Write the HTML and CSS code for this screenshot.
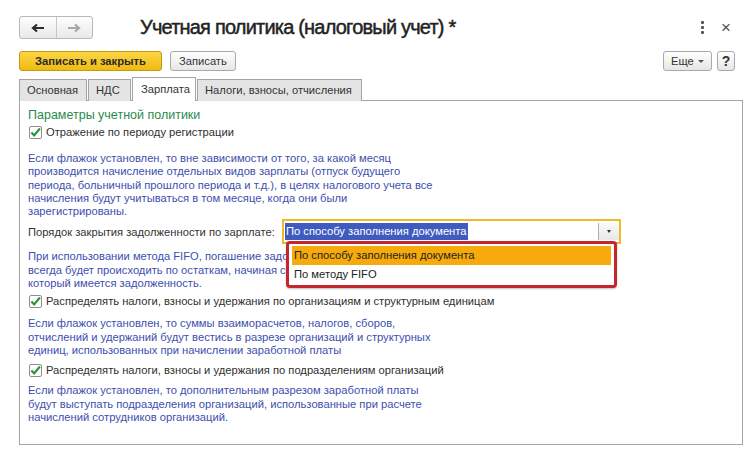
FILE: index.html
```html
<!DOCTYPE html>
<html lang="ru">
<head>
<meta charset="utf-8">
<title>Учетная политика (налоговый учет)</title>
<link rel="stylesheet" href="styles.css">
</head>
<body>
<div class="window">
  <div class="header">
    <div class="nav">
      <span class="nav-btn">
        <svg width="14" height="10" viewBox="0 0 14 10"><path d="M13 5H3M6 1.5L2 5l4 3.5" fill="none" stroke="#2b2b2b" stroke-width="2.2"/></svg>
      </span>
      <span class="nav-btn">
        <svg width="14" height="10" viewBox="0 0 14 10"><path d="M1 5h10M8 1.5L12 5 8 8.5" fill="none" stroke="#a8a8a8" stroke-width="2.2"/></svg>
      </span>
    </div>
    <h1 class="title">Учетная политика (налоговый учет) *</h1>
    <div class="win-icons">
      <span class="dots"><i></i><i></i><i></i></span>
      <span class="close">×</span>
    </div>
  </div>

  <div class="toolbar">
    <button class="btn btn-primary">Записать и закрыть</button>
    <button class="btn">Записать</button>
    <div class="toolbar-right">
      <button class="btn btn-more">Еще <span class="caret"></span></button>
      <button class="btn btn-help">?</button>
    </div>
  </div>

  <div class="tabs">
    <span class="tab">Основная</span>
    <span class="tab">НДС</span>
    <span class="tab active">Зарплата</span>
    <span class="tab">Налоги, взносы, отчисления</span>
  </div>

  <div class="panel">
    <div class="group-title">Параметры учетной политики</div>
    <label class="check"><span class="box"><svg width="12" height="11" viewBox="0 0 12 11"><path d="M1.5 5.5l3 3.2L10.8 1.2" fill="none" stroke="#27973a" stroke-width="2.4"/></svg></span>Отражение по периоду регистрации</label>
    <p class="hint p1">Если флажок установлен, то вне зависимости от того, за какой месяц<br>производится начисление отдельных видов зарплаты (отпуск будущего<br>периода, больничный прошлого периода и т.д.), в целях налогового учета все<br>начисления будут учитываться в том месяце, когда они были<br>зарегистрированы.</p>

    <div class="field-row">
      <span class="field-label">Порядок закрытия задолженности по зарплате:</span>
      <div class="select">
        <span class="select-value"><span class="sel">По способу заполнения документа</span></span>
        <span class="select-btn"><span class="dot-caret"></span></span>
        <div class="popup">
          <div class="opt current">По способу заполнения документа</div>
          <div class="opt">По методу FIFO</div>
        </div>
      </div>
    </div>

    <p class="hint p2">При использовании метода FIFO, погашение задолженности по зарплате<br>всегда будет происходить по остаткам, начиная с самого раннего месяца, в<br>который имеется задолженность.</p>

    <label class="check"><span class="box"><svg width="12" height="11" viewBox="0 0 12 11"><path d="M1.5 5.5l3 3.2L10.8 1.2" fill="none" stroke="#27973a" stroke-width="2.4"/></svg></span>Распределять налоги, взносы и удержания по организациям и структурным единицам</label>
    <p class="hint p3">Если флажок установлен, то суммы взаиморасчетов, налогов, сборов,<br>отчислений и удержаний будут вестись в разрезе организаций и структурных<br>единиц, использованных при начислении заработной платы</p>

    <label class="check"><span class="box"><svg width="12" height="11" viewBox="0 0 12 11"><path d="M1.5 5.5l3 3.2L10.8 1.2" fill="none" stroke="#27973a" stroke-width="2.4"/></svg></span>Распределять налоги, взносы и удержания по подразделениям организаций</label>
    <p class="hint p4">Если флажок установлен, то дополнительным разрезом заработной платы<br>будут выступать подразделения организаций, использованные при расчете<br>начислений сотрудников организаций.</p>
  </div>
</div>
</body>
</html>
```

FILE: styles.css
```css
* { box-sizing: border-box; }
html, body { margin: 0; padding: 0; background: #fff; }
body {
  font-family: "Liberation Sans", Arial, sans-serif;
  font-size: 11.2px;
  color: #333;
  width: 750px;
  height: 454px;
  overflow: hidden;
}
.window { padding: 16px 7px 0 19px; }

.header { display: flex; align-items: center; height: 23px; }
.nav {
  display: flex;
  width: 74px;
  height: 23px;
  border: 1px solid #b9b9b9;
  border-radius: 3px;
  background: linear-gradient(#fdfdfd, #e9e9e9);
}
.nav-btn {
  flex: 1;
  display: flex;
  align-items: center;
  justify-content: center;
}
.nav-btn + .nav-btn { border-left: 1px solid #c8c8c8; }
.title {
  margin: 0 0 0 47px;
  font-size: 20px;
  font-weight: normal;
  color: #222;
  letter-spacing: -0.8px;
  -webkit-text-stroke: 0.45px #222;
}
.win-icons { margin-left: auto; display: flex; align-items: center; gap: 17px; padding-right: 12px; }
.dots { display: flex; flex-direction: column; gap: 2px; }
.dots i { display: block; width: 3px; height: 3px; background: #555; border-radius: 1px; }
.close { font-size: 17px; color: #555; line-height: 1; }

.toolbar { display: flex; align-items: center; margin-top: 12px; height: 20px; gap: 8px; }
.btn {
  font-family: "Liberation Sans", Arial, sans-serif;
  font-size: 11.2px;
  color: #333;
  height: 20px;
  padding: 0 8px;
  border: 1px solid #a9a9a9;
  border-radius: 3px;
  background: linear-gradient(#ffffff, #e6e6e6);
  line-height: 18px;
}
.btn-primary {
  width: 143px;
  background: linear-gradient(#fbd545, #f0bb10);
  border-color: #c39b0e;
  font-weight: bold;
  color: #2b2b2b;
  padding: 0;
}
.toolbar-right { margin-left: auto; display: flex; gap: 5px; padding-right: 8px; }
.btn-more { width: 49px; padding: 0 6px; }
.caret {
  display: inline-block;
  border-left: 3px solid transparent;
  border-right: 3px solid transparent;
  border-top: 3px solid #555;
  vertical-align: 2px;
  margin-left: 1px;
}
.btn-help { width: 18px; padding: 0; font-weight: bold; font-size: 14px; }

.tabs { display: flex; margin-top: 7px; height: 23px; align-items: flex-end; position: relative; z-index: 1; }
.tab {
  height: 22px;
  line-height: 21px;
  padding: 0 7px;
  border: 1px solid #a4a4a4;
  border-bottom: none;
  background: #e4e4e4;
  margin-right: 1px;
  color: #333;
}
.tab.active { background: #fff; height: 24px; padding: 0 8px; line-height: 23px; }
.tab:nth-child(1) { width: 68px; }
.tab:nth-child(2) { width: 43px; }
.tab:nth-child(3) { width: 64px; }
.tab:nth-child(4) { width: 165px; }

.panel {
  margin-top: -1px;
  height: 345px;
  border: 1px solid #a4a4a4;
  padding: 7px 9px 0 8px;
  position: relative;
}
.group-title { color: #2c8a4e; font-size: 12.5px; line-height: 14px; }
.check { display: flex; align-items: center; height: 14px; margin-top: 3px; color: #2f2f2f; }
.box {
  width: 13px;
  height: 13px;
  border: 1px solid #8f8f8f;
  border-radius: 2px;
  margin: 0 4px 0 1px;
  display: flex;
  align-items: center;
  justify-content: center;
  background: #fff;
}
.hint { color: #3d4fae; line-height: 13.3px; margin: 0; }
.p1 { margin-top: 13px; }
.field-row { display: flex; align-items: center; height: 25px; margin-top: 1px; position: relative; }
.field-label { width: 254px; white-space: nowrap; }
.select {
  position: relative;
  display: flex;
  width: 339px;
  height: 25px;
  border: 2px solid #f2b928;
  background: #fff;
}
.select-value { flex: 1; padding: 2px 0 0 1px; }
.sel { background: #3f5bc0; color: #fff; padding: 1px 1px; display: inline-block; line-height: 15px; }
.select-btn {
  width: 21px;
  border-left: 1px solid #b0b0b0;
  margin: 2px 0;
  display: flex;
  align-items: center;
  justify-content: center;
  background: linear-gradient(#fafafa, #e8e8e8);
}
.dot-caret {
  border-left: 2.5px solid transparent;
  border-right: 2.5px solid transparent;
  border-top: 3px solid #333;
}
.popup {
  position: absolute;
  left: 2px;
  top: 20px;
  width: 331px;
  height: 47px;
  border: 3px solid #c4262d;
  border-radius: 4px;
  background: #fff;
  padding: 2px 3px;
  z-index: 5;
  box-shadow: 0 1px 2px rgba(0,0,0,.25);
}
.opt { height: 19px; line-height: 19px; padding-left: 2px; color: #222; }
.opt.current { background: #f6aa0c; }
.p2 { margin-top: 6px; }
.p2 + .check { margin-top: 4px; }
.p3 { margin-top: 9px; }
.p3 + .check { margin-top: 6px; }
.p4 { margin-top: 7px; }
```
